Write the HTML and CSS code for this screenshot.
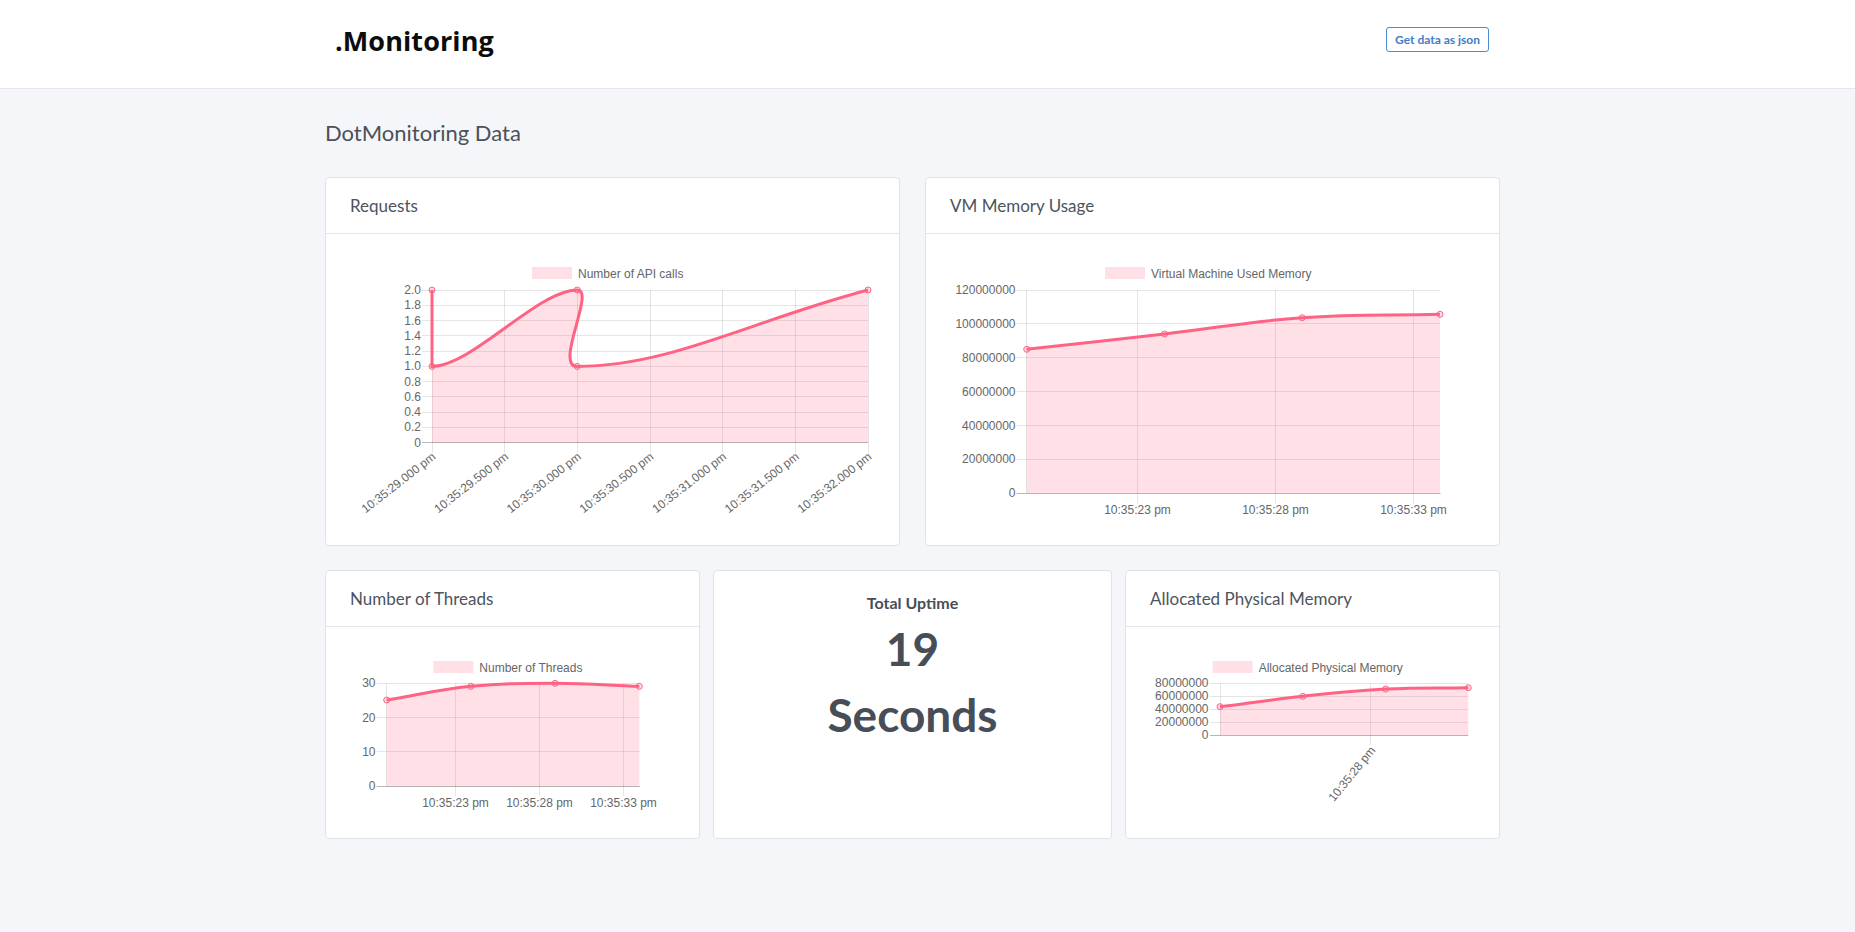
FILE: index.html
```html
<!DOCTYPE html>
<html lang="en">
<head>
<meta charset="utf-8">
<title>DotMonitoring</title>
<link rel="stylesheet" href="styles.css">
</head>
<body>
<header class="topbar">
  <div class="topbar-inner">
    <div class="logo">.Monitoring</div>
    <a class="json-btn" href="#">Get data as json</a>
  </div>
</header>
<main class="content">
  <h1 class="page-title">DotMonitoring Data</h1>

  <section class="row row-two">
    <div class="card">
      <div class="card-header">Requests</div>
      <div class="card-body">
        <svg class="chart" width="573" height="311" viewBox="326 234 573 311">
          <rect class="legend-box" x="532" y="267" width="40" height="12"/>
          <text x="578" y="273.5" class="legend-text">Number of API calls</text>
          <g class="grid">
            <line x1="422" y1="290.5" x2="868" y2="290.5"/>
            <line x1="422" y1="305.5" x2="868" y2="305.5"/>
            <line x1="422" y1="320.5" x2="868" y2="320.5"/>
            <line x1="422" y1="335.5" x2="868" y2="335.5"/>
            <line x1="422" y1="351.5" x2="868" y2="351.5"/>
            <line x1="422" y1="366.5" x2="868" y2="366.5"/>
            <line x1="422" y1="381.5" x2="868" y2="381.5"/>
            <line x1="422" y1="396.5" x2="868" y2="396.5"/>
            <line x1="422" y1="412.5" x2="868" y2="412.5"/>
            <line x1="422" y1="427.5" x2="868" y2="427.5"/>
            <line x1="432.5" y1="290" x2="432.5" y2="452.7"/>
            <line x1="504.5" y1="290" x2="504.5" y2="452.7"/>
            <line x1="577.5" y1="290" x2="577.5" y2="452.7"/>
            <line x1="650.5" y1="290" x2="650.5" y2="452.7"/>
            <line x1="722.5" y1="290" x2="722.5" y2="452.7"/>
            <line x1="795.5" y1="290" x2="795.5" y2="452.7"/>
            <line x1="868.5" y1="290" x2="868.5" y2="452.7"/>
          </g>
          <line class="axis" x1="422" y1="442.5" x2="868" y2="442.5"/>
          <g class="ylabels">
            <text x="421" y="290">2.0</text>
            <text x="421" y="305.3">1.8</text>
            <text x="421" y="320.5">1.6</text>
            <text x="421" y="335.8">1.4</text>
            <text x="421" y="351.1">1.2</text>
            <text x="421" y="366.4">1.0</text>
            <text x="421" y="381.6">0.8</text>
            <text x="421" y="396.9">0.6</text>
            <text x="421" y="412.2">0.4</text>
            <text x="421" y="427.4">0.2</text>
            <text x="421" y="442.7">0</text>
          </g>
          <g class="xlabels-rot">
            <text transform="translate(434 455) rotate(-38)">10:35:29.000 pm</text>
            <text transform="translate(506.7 455) rotate(-38)">10:35:29.500 pm</text>
            <text transform="translate(579.3 455) rotate(-38)">10:35:30.000 pm</text>
            <text transform="translate(652 455) rotate(-38)">10:35:30.500 pm</text>
            <text transform="translate(724.7 455) rotate(-38)">10:35:31.000 pm</text>
            <text transform="translate(797.3 455) rotate(-38)">10:35:31.500 pm</text>
            <text transform="translate(870 455) rotate(-38)">10:35:32.000 pm</text>
          </g>
          <path class="area" d="M432,290 C432,320.5 432,366.4 432,366.4 C471.7,366.4 537.6,290 577.3,290 C595.8,290 553.8,366.4 577.3,366.4 C670,366.4 751.7,320.5 868,290 L868,442.7 L432,442.7 Z"/>
          <path class="line" d="M432,290 C432,320.5 432,366.4 432,366.4 C471.7,366.4 537.6,290 577.3,290 C595.8,290 553.8,366.4 577.3,366.4 C670,366.4 751.7,320.5 868,290"/>
          <g class="pts">
            <circle cx="432" cy="290" r="3"/>
            <circle cx="432" cy="366.4" r="3"/>
            <circle cx="577.3" cy="290" r="3"/>
            <circle cx="577.3" cy="366.4" r="3"/>
            <circle cx="868" cy="290" r="3"/>
          </g>
        </svg>
      </div>
    </div>

    <div class="card">
      <div class="card-header">VM Memory Usage</div>
      <div class="card-body">
        <svg class="chart" width="573" height="311" viewBox="926 234 573 311">
          <rect class="legend-box" x="1105" y="267" width="40" height="12"/>
          <text x="1151" y="273.5" class="legend-text">Virtual Machine Used Memory</text>
          <g class="grid">
            <line x1="1016.7" y1="290.5" x2="1440.5" y2="290.5"/>
            <line x1="1016.7" y1="323.5" x2="1440.5" y2="323.5"/>
            <line x1="1016.7" y1="357.5" x2="1440.5" y2="357.5"/>
            <line x1="1016.7" y1="391.5" x2="1440.5" y2="391.5"/>
            <line x1="1016.7" y1="425.5" x2="1440.5" y2="425.5"/>
            <line x1="1016.7" y1="459.5" x2="1440.5" y2="459.5"/>
            <line x1="1026.5" y1="290" x2="1026.5" y2="493.3"/>
            <line x1="1137.5" y1="290" x2="1137.5" y2="503.3"/>
            <line x1="1275.5" y1="290" x2="1275.5" y2="503.3"/>
            <line x1="1413.5" y1="290" x2="1413.5" y2="503.3"/>
          </g>
          <line class="axis" x1="1016.7" y1="493.5" x2="1440.5" y2="493.5"/>
          <g class="ylabels">
            <text x="1015.5" y="290">120000000</text>
            <text x="1015.5" y="323.9">100000000</text>
            <text x="1015.5" y="357.8">80000000</text>
            <text x="1015.5" y="391.7">60000000</text>
            <text x="1015.5" y="425.6">40000000</text>
            <text x="1015.5" y="459.4">20000000</text>
            <text x="1015.5" y="493.3">0</text>
          </g>
          <g class="xlabels">
            <text x="1137.5" y="509.5">10:35:23 pm</text>
            <text x="1275.5" y="509.5">10:35:28 pm</text>
            <text x="1413.5" y="509.5">10:35:33 pm</text>
          </g>
          <path class="area" d="M1026.7,349.3 C1081.8,343.2 1109.4,340.3 1164.5,334 C1219.6,327.7 1247.1,321.6 1302.2,317.7 C1357.3,313.8 1384.9,315.7 1440,314.3 L1440,493.3 L1026.7,493.3 Z"/>
          <path class="line" d="M1026.7,349.3 C1081.8,343.2 1109.4,340.3 1164.5,334 C1219.6,327.7 1247.1,321.6 1302.2,317.7 C1357.3,313.8 1384.9,315.7 1440,314.3"/>
          <g class="pts">
            <circle cx="1026.7" cy="349.3" r="3"/>
            <circle cx="1164.5" cy="334" r="3"/>
            <circle cx="1302.2" cy="317.7" r="3"/>
            <circle cx="1440" cy="314.3" r="3"/>
          </g>
        </svg>
      </div>
    </div>
  </section>

  <section class="row row-three">
    <div class="card">
      <div class="card-header">Number of Threads</div>
      <div class="card-body">
        <svg class="chart" width="373" height="211" viewBox="326 627 373 211">
          <rect class="legend-box" x="433.3" y="661" width="40" height="12"/>
          <text x="479.3" y="667.5" class="legend-text">Number of Threads</text>
          <g class="grid">
            <line x1="376.7" y1="683.5" x2="640" y2="683.5"/>
            <line x1="376.7" y1="717.5" x2="640" y2="717.5"/>
            <line x1="376.7" y1="751.5" x2="640" y2="751.5"/>
            <line x1="386.5" y1="683.3" x2="386.5" y2="786.2"/>
            <line x1="455.5" y1="683.3" x2="455.5" y2="796.2"/>
            <line x1="539.5" y1="683.3" x2="539.5" y2="796.2"/>
            <line x1="623.5" y1="683.3" x2="623.5" y2="796.2"/>
          </g>
          <line class="axis" x1="376.7" y1="786.5" x2="640" y2="786.5"/>
          <g class="ylabels">
            <text x="375.5" y="683.3">30</text>
            <text x="375.5" y="717.6">20</text>
            <text x="375.5" y="751.9">10</text>
            <text x="375.5" y="786.2">0</text>
          </g>
          <g class="xlabels">
            <text x="455.5" y="802.5">10:35:23 pm</text>
            <text x="539.5" y="802.5">10:35:28 pm</text>
            <text x="623.5" y="802.5">10:35:33 pm</text>
          </g>
          <path class="area" d="M386.7,700 C420.4,694.5 437,689.7 470.9,686.3 C504.4,683.3 521.4,683.3 555.1,683.3 C588.8,683.3 605.6,685.1 639.3,686.3 L639.3,786.2 L386.7,786.2 Z"/>
          <path class="line" d="M386.7,700 C420.4,694.5 437,689.7 470.9,686.3 C504.4,683.3 521.4,683.3 555.1,683.3 C588.8,683.3 605.6,685.1 639.3,686.3"/>
          <g class="pts">
            <circle cx="386.7" cy="700" r="3"/>
            <circle cx="470.9" cy="686.3" r="3"/>
            <circle cx="555.1" cy="683.3" r="3"/>
            <circle cx="639.3" cy="686.3" r="3"/>
          </g>
        </svg>
      </div>
    </div>

    <div class="card uptime">
      <div class="uptime-label">Total Uptime</div>
      <div class="uptime-value">19</div>
      <div class="uptime-value">Seconds</div>
    </div>

    <div class="card">
      <div class="card-header">Allocated Physical Memory</div>
      <div class="card-body">
        <svg class="chart" width="373" height="211" viewBox="1126 627 373 211">
          <rect class="legend-box" x="1212.7" y="661" width="40" height="12"/>
          <text x="1258.7" y="667.5" class="legend-text">Allocated Physical Memory</text>
          <g class="grid">
            <line x1="1210" y1="683.5" x2="1468.3" y2="683.5"/>
            <line x1="1210" y1="696.5" x2="1468.3" y2="696.5"/>
            <line x1="1210" y1="709.5" x2="1468.3" y2="709.5"/>
            <line x1="1210" y1="722.5" x2="1468.3" y2="722.5"/>
            <line x1="1220.5" y1="683.3" x2="1220.5" y2="735.3"/>
            <line x1="1370.5" y1="683.3" x2="1370.5" y2="745.3"/>
          </g>
          <line class="axis" x1="1210" y1="735.5" x2="1468.3" y2="735.5"/>
          <g class="ylabels">
            <text x="1208.5" y="683.3">80000000</text>
            <text x="1208.5" y="696.3">60000000</text>
            <text x="1208.5" y="709.3">40000000</text>
            <text x="1208.5" y="722.3">20000000</text>
            <text x="1208.5" y="735.3">0</text>
          </g>
          <g class="xlabels-rot">
            <text transform="translate(1373 748) rotate(-51)">10:35:28 pm</text>
          </g>
          <path class="area" d="M1220,706.7 C1253.1,702.5 1269.7,699.8 1302.8,696.3 C1335.9,692.8 1352.5,690.7 1385.6,689 C1418.7,687.3 1435.2,688.2 1468.3,687.7 L1468.3,735.3 L1220,735.3 Z"/>
          <path class="line" d="M1220,706.7 C1253.1,702.5 1269.7,699.8 1302.8,696.3 C1335.9,692.8 1352.5,690.7 1385.6,689 C1418.7,687.3 1435.2,688.2 1468.3,687.7"/>
          <g class="pts">
            <circle cx="1220" cy="706.7" r="3"/>
            <circle cx="1302.8" cy="696.3" r="3"/>
            <circle cx="1385.6" cy="689" r="3"/>
            <circle cx="1468.3" cy="687.7" r="3"/>
          </g>
        </svg>
      </div>
    </div>
  </section>
</main>
</body>
</html>
```

FILE: styles.css
```css
* {
  box-sizing: border-box;
}

body {
  margin: 0;
  background: #f5f6fa;
  font-family: Lato, "Liberation Sans", sans-serif;
  color: #4b5159;
}

.topbar {
  background: #ffffff;
  border-bottom: 1px solid #e3e5ea;
}

.topbar-inner {
  width: 1175px;
  margin-left: calc(50% - 602.5px);
  height: 88px;
  padding: 0 11px 0 10px;
  display: flex;
  align-items: flex-start;
  justify-content: space-between;
}

.logo {
  margin-top: 25px;
  font-family: "Open Sans", Lato, sans-serif;
  font-size: 27px;
  line-height: 32px;
  font-weight: 700;
  color: #0c0c0c;
  letter-spacing: 0.1px;
}

.json-btn {
  margin-top: 27px;
  height: 25px;
  padding: 0 8px;
  display: inline-flex;
  align-items: center;
  border: 1px solid #4a8bd4;
  border-radius: 3px;
  color: #3f7cc4;
  font-size: 12px;
  font-weight: 700;
  text-decoration: none;
}

.content {
  width: 1175px;
  margin-left: calc(50% - 602.5px);
}

.page-title {
  margin: 31px 0 31px;
  font-size: 22px;
  line-height: 26px;
  font-weight: 400;
  color: #4b5159;
}

.row {
  display: grid;
}

.row-two {
  grid-template-columns: 1fr 1fr;
  gap: 25px;
}

.row-three {
  grid-template-columns: 375px 1fr 375px;
  gap: 13px;
  margin-top: 24px;
}

.card {
  background: #ffffff;
  border: 1px solid #dfe3e9;
  border-radius: 4px;
}

.card-header {
  height: 56px;
  line-height: 55px;
  padding: 0 24px;
  border-bottom: 1px solid #e2e5eb;
  font-size: 17px;
  color: #4d545e;
}

.card-body {
  overflow: hidden;
}

.chart {
  display: block;
}

.chart text {
  font-family: "Liberation Sans", Arial, sans-serif;
  font-size: 12px;
  fill: #666666;
}

.chart .legend-text {
  dominant-baseline: central;
}

.legend-box {
  fill: rgba(255, 99, 132, 0.2);
}

.grid line {
  stroke: rgba(0, 0, 0, 0.1);
  stroke-width: 1;
}

.axis {
  stroke: rgba(0, 0, 0, 0.28);
  stroke-width: 1;
}

.ylabels text {
  text-anchor: end;
  dominant-baseline: central;
}

.xlabels text {
  text-anchor: middle;
  dominant-baseline: central;
}

.xlabels-rot text {
  text-anchor: end;
  dominant-baseline: central;
}

.area {
  fill: rgba(255, 99, 132, 0.2);
}

.line {
  fill: none;
  stroke: #ff6384;
  stroke-width: 3;
}

.pts circle {
  fill: rgba(255, 99, 132, 0.2);
  stroke: #ff6384;
  stroke-width: 1;
}

.uptime {
  padding-top: 22px;
  text-align: center;
  color: #474e57;
  font-weight: 700;
}

.uptime-label {
  font-size: 16px;
  line-height: 20px;
}

.uptime-value {
  font-size: 46px;
  line-height: 66px;
}

.uptime-label + .uptime-value {
  margin-top: 3px;
}
```
